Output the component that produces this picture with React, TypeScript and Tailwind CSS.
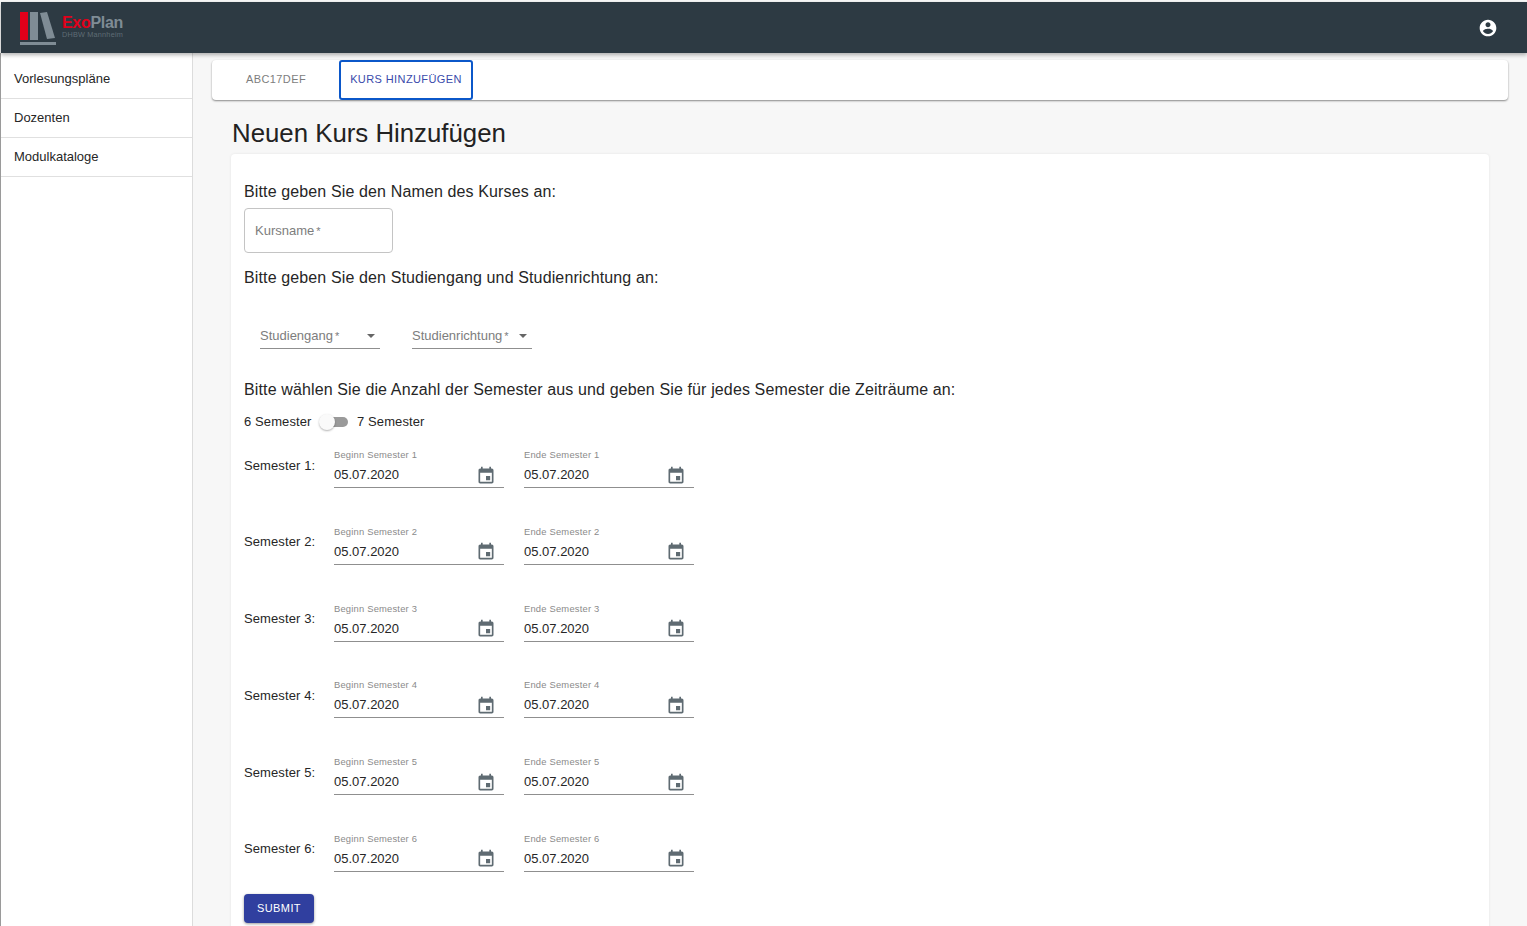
const font = "font-['Liberation_Sans',Arial,sans-serif]";

function CalendarIcon() {
  return (
    <svg viewBox="0 0 24 24" className="w-[20px] h-[20px] fill-[#5f6b72] shrink-0">
      <path d="M17 12h-5v5h5v-5zM16 1v2H8V1H6v2H5c-1.11 0-1.99.9-1.99 2L3 19c0 1.1.89 2 2 2h14c1.1 0 2-.9 2-2V5c0-1.1-.9-2-2-2h-1V1h-2zm3 18H5V8h14v11z" />
    </svg>
  );
}

function DateField({ label }: { label: string }) {
  return (
    <div className="w-[170px]">
      <div className="text-[9.4px] leading-[10px] tracking-[0.2px] text-[#8a8a8a]">{label}</div>
      <div className="flex items-center justify-between h-[28px] pt-[4px] pr-[8.5px] border-b border-[#8f8f8f]">
        <span className="text-[13px] mb-[1.5px] text-[#262626]">05.07.2020</span>
        <CalendarIcon />
      </div>
    </div>
  );
}

function SemesterRow({ n }: { n: number }) {
  return (
    <div className="flex h-[56px]">
      <div className="w-[90px] pt-[6.5px] text-[13px] leading-[18px] text-[#262626] tracking-[0.1px]">Semester {n}:</div>
      <div className="flex gap-[20px]">
        <DateField label={`Beginn Semester ${n}`} />
        <DateField label={`Ende Semester ${n}`} />
      </div>
    </div>
  );
}

function SelectField({ label, width }: { label: string; width: string }) {
  return (
    <div className={`flex items-center justify-between h-[27px] pt-[2px] border-b border-[#8f8f8f] ${width}`}>
      <span className="text-[13px] text-[#7d7d7d]">{label}<span className="text-[11px] ml-[2px]">*</span></span>
      <span className="w-0 h-0 mr-[5px] border-x-[4px] border-x-transparent border-t-[4px] border-t-[#666]" />
    </div>
  );
}

export default function App() {
  return (
    <div className={`h-[926px] overflow-hidden flex flex-col bg-[#f7f7f7] ${font}`}>
      {/* App bar */}
      <header className="h-[51px] shrink-0 mt-[2px] ml-[1px] bg-[#2d3a43] flex items-center justify-between pl-[18px] pr-[29px] shadow-[0_2px_4px_rgba(0,0,0,0.3)] z-10">
        <div className="flex items-center gap-[5px]">
          <svg viewBox="0 0 38 34" className="w-[38px] h-[34px]">
            <rect x="1" y="1" width="8" height="28" fill="#e2001a" />
            <rect x="11" y="1" width="8" height="28" fill="#7f8c95" />
            <polygon points="21,2 28,1 36,27 28,28" fill="#7f8c95" />
            <rect x="1" y="31" width="36" height="3" fill="#7f8c95" />
          </svg>
          <div className="flex flex-col pb-[2px]">
            <div className="text-[16px] leading-[17px] font-bold tracking-[-0.3px] text-[#7f8c95]"><span className="text-[#e2001a]">Exo</span>Plan</div>
            <div className="text-[7.3px] leading-[8px] tracking-[0.2px] text-[#5f6c75]">DHBW Mannheim</div>
          </div>
        </div>
        <svg viewBox="0 0 24 24" className="w-[20px] h-[20px] fill-white">
          <path d="M12 2C6.48 2 2 6.48 2 12s4.48 10 10 10 10-4.48 10-10S17.52 2 12 2zm0 3c1.66 0 3 1.34 3 3s-1.34 3-3 3-3-1.34-3-3 1.34-3 3-3zm0 14.2c-2.5 0-4.71-1.28-6-3.22.03-1.99 4-3.08 6-3.08 1.99 0 5.97 1.09 6 3.08-1.29 1.94-3.5 3.22-6 3.22z" />
        </svg>
      </header>

      <div className="flex flex-1 min-h-0">
        {/* Sidebar */}
        <aside className="w-[193px] shrink-0 pt-[7px] bg-white border-l border-l-[#9a9a9a] border-r border-r-[#dcdcdc]">
          {["Vorlesungspläne", "Dozenten", "Modulkataloge"].map((item) => (
            <div key={item} className="h-[39px] pl-[13px] flex items-center border-b border-[#e0e0e0] text-[13px] text-[#262626]">
              {item}
            </div>
          ))}
        </aside>

        {/* Main */}
        <main className="flex-1 min-w-0 pl-[19px] pr-[19px] pt-[7px]">
          <div className="h-[39.5px] bg-white rounded-[4px] shadow-[0_1px_2px_rgba(0,0,0,0.45)] flex pl-[34px]">
            <div className="w-[93px] pt-[13px] text-[11px] leading-[13px] tracking-[0.4px] text-[#7d7d7d]">ABC17DEF</div>
            <div className="w-[134px] h-[39.5px] pb-[1px] rounded-[3px] border-2 border-[#0b57c9] flex items-center justify-center text-[11px] tracking-[0.4px] text-[#3949ab]">
              KURS HINZUFÜGEN
            </div>
          </div>

          <h1 className="ml-[20px] mt-[18px] text-[25.8px] leading-[30px] text-[#222]">Neuen Kurs Hinzufügen</h1>

          <section className="ml-[19px] mr-[19px] mt-[6.5px] h-[800px] bg-white rounded-t-[4px] shadow-[0_0_3px_rgba(0,0,0,0.08)] pl-[13px] pt-[28px]">
            <p className="text-[16px] leading-[20px] tracking-[0.13px] text-[#262626]">Bitte geben Sie den Namen des Kurses an:</p>
            <div className="mt-[6px] w-[149px] h-[45px] pl-[10px] flex items-center border border-[#c4c4c4] rounded-[4px] text-[13px] text-[#7d7d7d]">
              <span>Kursname<span className="text-[11px] ml-[2px]">*</span></span>
            </div>
            <p className="mt-[15px] text-[16px] leading-[20px] tracking-[0.13px] text-[#262626]">Bitte geben Sie den Studiengang und Studienrichtung an:</p>
            <div className="mt-[34px] ml-[16px] flex gap-[32px]">
              <SelectField label="Studiengang" width="w-[120px]" />
              <SelectField label="Studienrichtung" width="w-[120px]" />
            </div>
            <p className="mt-[31px] text-[16px] leading-[20px] tracking-[0.13px] text-[#262626]">
              Bitte wählen Sie die Anzahl der Semester aus und geben Sie für jedes Semester die Zeiträume an:
            </p>
            <div className="mt-[12px] flex items-center h-[20px] text-[13px] text-[#262626] tracking-[0.1px]">
              <span>6 Semester</span>
              <div className="relative ml-[9px] mr-[8.5px] w-[28px] h-[10px] rounded-full bg-[#9a9a9a]">
                <div className="absolute left-[-1px] top-[-3px] w-[16px] h-[16px] rounded-full bg-[#fafafa] shadow-[0_1px_2px_rgba(0,0,0,0.3)]" />
              </div>
              <span>7 Semester</span>
            </div>
            <div className="mt-[18px] flex flex-col gap-[20.8px]">
              {[1, 2, 3, 4, 5, 6].map((n) => (
                <SemesterRow key={n} n={n} />
              ))}
            </div>
            <button className="block mt-[4px] w-[70px] h-[29px] rounded-[4px] bg-[#303f9f] text-white text-[11px] tracking-[0.4px] shadow-[0_1px_3px_rgba(0,0,0,0.4)]">
              SUBMIT
            </button>
          </section>
        </main>
      </div>
    </div>
  );
}
